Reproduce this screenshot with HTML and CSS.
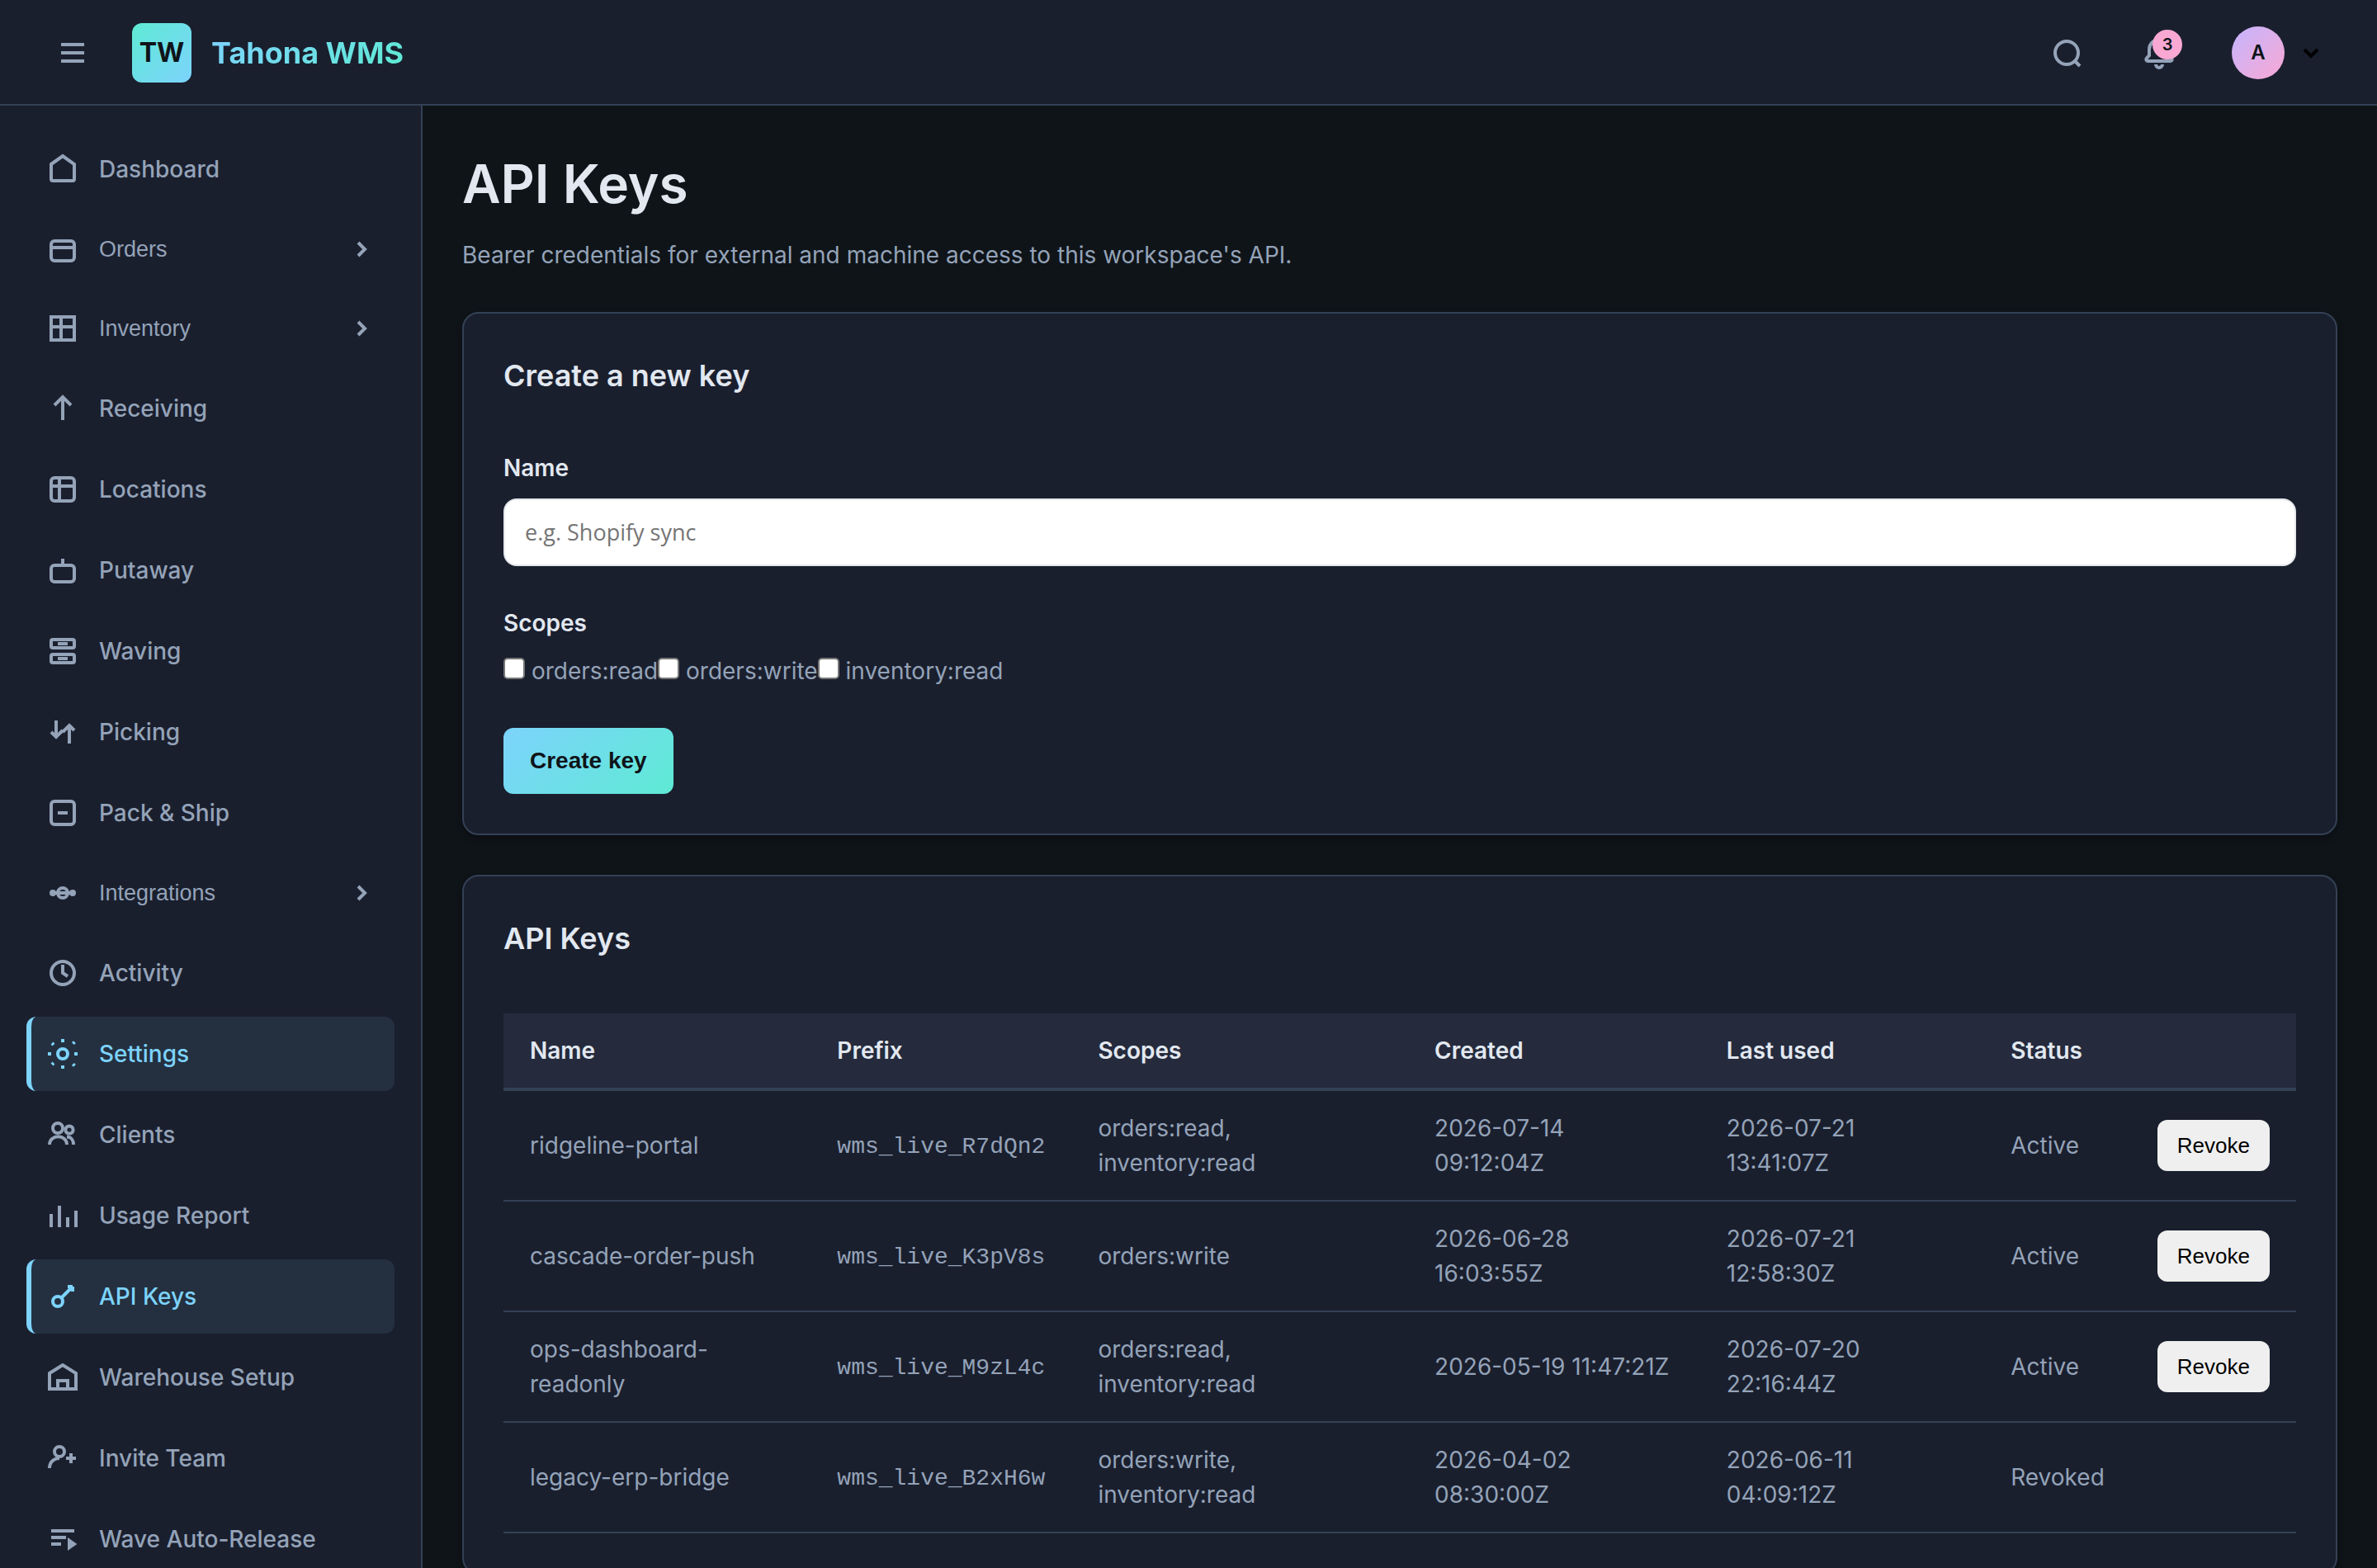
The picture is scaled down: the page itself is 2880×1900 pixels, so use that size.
FILE: index.html
```html
<!DOCTYPE html>
<html lang="en">
<head>
<meta charset="utf-8">
<title>API Keys - Tahona WMS</title>
<link rel="stylesheet" href="styles.css">
</head>
<body>
<div class="app">
  <header class="topbar">
    <div class="topbar-left">
      <button class="icon-button" type="button" aria-label="Toggle menu">
        <svg class="icon" viewBox="0 0 20 20"><path d="M3 5h14M3 10h14M3 15h14"/></svg>
      </button>
      <a class="brand" href="#">
        <span class="brand-mark">TW</span>
        <span class="brand-name">Tahona WMS</span>
      </a>
    </div>
    <div class="topbar-right">
      <button class="icon-button" type="button" aria-label="Search">
        <svg class="icon" viewBox="0 0 20 20"><circle cx="10" cy="10" r="7"/><path d="M15 15l3 3"/></svg>
      </button>
      <button class="icon-button" type="button" aria-label="Notifications">
        <svg class="icon" viewBox="0 0 20 20"><path d="M10 2a6 6 0 0 0-6 6v3.600L2.400 13.300a1 1 0 0 0 .7 1.700h13.800a1 1 0 0 0 .7-1.700L16 11.600V8a6 6 0 0 0-6-6zM8 17a2 2 0 0 0 4 0"/></svg>
        <span class="badge">3</span>
      </button>
      <button class="user-button" type="button" aria-label="Account">
        <span class="avatar">A</span>
        <svg class="chevron" viewBox="0 0 16 16"><path d="M4 6l4 4 4-4"/></svg>
      </button>
    </div>
  </header>
  <div class="body">
    <nav class="sidebar">
      <a class="nav-item" href="#"><svg class="icon" viewBox="0 0 20 20"><path d="M3 7l7-5 7 5v9a1 1 0 0 1-1 1H4a1 1 0 0 1-1-1z"/></svg>Dashboard</a>
      <button class="nav-item nav-group" type="button"><svg class="icon" viewBox="0 0 20 20"><rect x="3" y="5" width="14" height="12" rx="2"/><path d="M3 9h14"/></svg>Orders<svg class="chevron" viewBox="0 0 16 16"><path d="M6 4l4 4-4 4"/></svg></button>
      <button class="nav-item nav-group" type="button"><svg class="icon" viewBox="0 0 20 20"><path d="M3 3h14v14H3zM3 9h14M9 3v14"/></svg>Inventory<svg class="chevron" viewBox="0 0 16 16"><path d="M6 4l4 4-4 4"/></svg></button>
      <a class="nav-item" href="#"><svg class="icon" viewBox="0 0 20 20"><path d="M10 17V3M5 8l5-5 5 5"/></svg>Receiving</a>
      <a class="nav-item" href="#"><svg class="icon" viewBox="0 0 20 20"><rect x="3" y="3" width="14" height="14" rx="2"/><path d="M3 8h14M8 3v14"/></svg>Locations</a>
      <a class="nav-item" href="#"><svg class="icon" viewBox="0 0 20 20"><rect x="3" y="7" width="14" height="10" rx="2"/><path d="M10 3v4"/></svg>Putaway</a>
      <a class="nav-item" href="#"><svg class="icon" viewBox="0 0 20 20"><rect x="3" y="3" width="14" height="5" rx="1"/><rect x="3" y="12" width="14" height="5" rx="1"/><path d="M7 5.500h6M7 14.500h6"/></svg>Waving</a>
      <a class="nav-item" href="#"><svg class="icon" viewBox="0 0 20 20"><path d="M6 3v10M3 10l3 3 4-4M14 17V7M10 10l4-4 3 3"/></svg>Picking</a>
      <a class="nav-item" href="#"><svg class="icon" viewBox="0 0 20 20"><rect x="3" y="3" width="14" height="14" rx="2"/><path d="M7 10h6"/></svg>Pack &amp; Ship</a>
      <button class="nav-item nav-group" type="button"><svg class="icon" viewBox="0 0 20 20"><circle cx="4" cy="10" r="1"/><circle cx="16" cy="10" r="1"/><circle cx="10" cy="10" r="3"/><path d="M5 10h10"/></svg>Integrations<svg class="chevron" viewBox="0 0 16 16"><path d="M6 4l4 4-4 4"/></svg></button>
      <a class="nav-item" href="#"><svg class="icon" viewBox="0 0 20 20"><circle cx="10" cy="10" r="7"/><path d="M10 5v5l3 2"/></svg>Activity</a>
      <a class="nav-item active" href="#"><svg class="icon" viewBox="0 0 20 20"><circle cx="10" cy="10" r="3"/><path d="M10 1v2M10 17v2M1 10h2M17 10h2M3.500 3.500l1 1M16.200 3.800l1-1M3.500 16.500l1-1M16.200 16.200l1 1"/></svg>Settings</a>
      <a class="nav-item" href="#"><svg class="icon" viewBox="0 0 20 20"><circle cx="7" cy="6" r="3"/><circle cx="14" cy="7" r="2.300"/><path d="M2 16c0-6.500 10.500-6.500 10.500 0M12.500 11.300c2.500 0 4 2 4 4.700"/></svg>Clients</a>
      <a class="nav-item" href="#"><svg class="icon" viewBox="0 0 20 20"><path d="M3 17V9M8 17V4M13 17v-6M18 17V7"/></svg>Usage Report</a>
      <a class="nav-item active" href="#"><svg class="icon" viewBox="0 0 20 20"><circle cx="7" cy="13" r="3"/><path d="M9 11l6-6M13 4h3M16 4v3"/></svg>API Keys</a>
      <a class="nav-item" href="#"><svg class="icon" viewBox="0 0 20 20"><path d="M2 7.500l8-5 8 5V17H2zM7 17v-5h6v5"/></svg>Warehouse Setup</a>
      <a class="nav-item" href="#"><svg class="icon" viewBox="0 0 20 20"><circle cx="8" cy="6" r="3"/><path d="M2 16c0-4 3-6 6-6M15 7v6M12 10h6"/></svg>Invite Team</a>
      <a class="nav-item" href="#"><svg class="icon" viewBox="0 0 20 20"><path d="M3 5h14M3 9h9M3 13h6"/><path class="solid" d="M13 9v8l5.700-4z"/></svg>Wave Auto-Release</a>
    </nav>
    <main class="content">
      <div class="page-head">
        <h1>API Keys</h1>
        <p>Bearer credentials for external and machine access to this workspace's API.</p>
      </div>
      <section class="card">
        <h2>Create a new key</h2>
        <form class="key-form">
          <div class="field">
            <label class="field-label" for="key-name">Name</label>
            <input class="text-input" id="key-name" type="text" placeholder="e.g. Shopify sync">
          </div>
          <fieldset class="field">
            <legend class="field-label">Scopes</legend>
            <div class="scopes"><label><input type="checkbox"> orders:read</label><label><input type="checkbox"> orders:write</label><label><input type="checkbox"> inventory:read</label></div>
          </fieldset>
          <button class="primary-button" type="button">Create key</button>
        </form>
      </section>
      <section class="card">
        <h2>API Keys</h2>
        <table class="keys">
          <thead>
            <tr><th>Name</th><th>Prefix</th><th>Scopes</th><th>Created</th><th>Last used</th><th>Status</th><th></th></tr>
          </thead>
          <tbody>
            <tr><td>ridgeline-portal</td><td><code>wms_live_R7dQn2</code></td><td>orders:read, inventory:read</td><td>2026-07-14 09:12:04Z</td><td>2026-07-21 13:41:07Z</td><td>Active</td><td><button class="revoke" type="button">Revoke</button></td></tr>
            <tr><td>cascade-order-push</td><td><code>wms_live_K3pV8s</code></td><td>orders:write</td><td>2026-06-28 16:03:55Z</td><td>2026-07-21 12:58:30Z</td><td>Active</td><td><button class="revoke" type="button">Revoke</button></td></tr>
            <tr><td>ops-dashboard-readonly</td><td><code>wms_live_M9zL4c</code></td><td>orders:read, inventory:read</td><td>2026-05-19 11:47:21Z</td><td>2026-07-20 22:16:44Z</td><td>Active</td><td><button class="revoke" type="button">Revoke</button></td></tr>
            <tr><td>legacy-erp-bridge</td><td><code>wms_live_B2xH6w</code></td><td>orders:write, inventory:read</td><td>2026-04-02 08:30:00Z</td><td>2026-06-11 04:09:12Z</td><td>Revoked</td><td></td></tr>
          </tbody>
        </table>
      </section>
    </main>
  </div>
</div>
</body>
</html>
```

FILE: styles.css
```css
:root {
  --bg: #0f1419;
  --surface: #1a1f2e;
  --surface-raised: #252b3d;
  --line: #334155;
  --text: #e2e8f0;
  --muted: #94a3b8;
  --ink: #0f1419;
  --sky: #7dd3fc;
  --teal: #5eead4;
  --control-font: "Liberation Sans", Arial, sans-serif;
}

* {
  box-sizing: border-box;
  margin: 0;
  padding: 0;
}

body {
  background: var(--bg);
  color: var(--text);
  font: 28px/42px Inter, sans-serif;
}

a {
  color: inherit;
  text-decoration: none;
}

button {
  background: none;
  border: 0;
  font: 27px/30px var(--control-font);
}

fieldset {
  border: 0;
  min-width: 0;
}

.app {
  display: flex;
  flex-direction: column;
  height: 100vh;
}

.icon,
.chevron {
  flex: none;
  fill: none;
  stroke: currentColor;
  stroke-width: 2;
}

.icon {
  width: 40px;
  height: 40px;
}

.icon .solid {
  fill: currentColor;
  stroke: none;
}

.chevron {
  width: 32px;
  height: 32px;
}

/* Top bar */
.topbar {
  flex: none;
  display: flex;
  align-items: center;
  justify-content: space-between;
  height: 128px;
  padding: 2px 48px 0;
  background: var(--surface);
  border-bottom: 2px solid var(--line);
}

.topbar-left,
.topbar-right {
  display: flex;
  align-items: center;
  gap: 32px;
}

.brand {
  display: flex;
  align-items: center;
  gap: 24px;
}

.brand-mark {
  width: 72px;
  height: 72px;
  border-radius: 12px;
  background: linear-gradient(135deg, var(--teal), var(--sky));
  color: var(--ink);
  font-size: 32px;
  font-weight: 700;
  line-height: 72px;
  text-align: center;
}

.brand-name {
  background: linear-gradient(135deg, var(--sky), var(--teal));
  background-clip: text;
  color: transparent;
  font-size: 36px;
  font-weight: 700;
}

.icon-button {
  position: relative;
  display: flex;
  padding: 20px;
  color: var(--muted);
}

.badge {
  position: absolute;
  top: 12px;
  right: 12px;
  width: 36px;
  height: 36px;
  border-radius: 50%;
  background: #f9a8d4;
  color: var(--ink);
  font: 600 20px/36px Inter, sans-serif;
  text-align: center;
}

.user-button {
  display: flex;
  align-items: center;
  gap: 16px;
  padding: 0 16px;
  color: #000;
}

.avatar {
  width: 64px;
  height: 64px;
  border-radius: 50%;
  background: linear-gradient(135deg, #c4b5fd, #f9a8d4);
  color: var(--ink);
  font: 600 24px/64px Inter, sans-serif;
  text-align: center;
}

/* Side navigation */
.body {
  flex: 1;
  display: flex;
  min-height: 0;
}

.sidebar {
  flex: none;
  display: flex;
  flex-direction: column;
  gap: 8px;
  width: 512px;
  padding: 32px;
  overflow-y: auto;
  scrollbar-width: none;
  background: var(--surface);
  border-right: 2px solid var(--line);
}

.nav-item {
  flex: none;
  display: flex;
  align-items: center;
  gap: 24px;
  padding: 24px 24px 24px 18px;
  border-left: 6px solid transparent;
  border-radius: 12px;
  color: var(--muted);
  font-weight: 500;
}

.nav-group {
  font-weight: 400;
}

.nav-group .chevron {
  margin-left: auto;
}

.nav-item.active {
  border-left-color: var(--sky);
  background: #243040;
  color: var(--sky);
}

/* Page */
.content {
  flex: 1;
  display: flex;
  flex-direction: column;
  gap: 48px;
  min-width: 0;
  padding: 48px;
  overflow-y: auto;
  scrollbar-width: none;
}

.page-head {
  display: flex;
  flex-direction: column;
  gap: 18px;
  color: var(--muted);
}

h1 {
  color: var(--text);
  font-size: 64px;
  font-weight: 600;
  line-height: 94px;
}

h2 {
  font-size: 36px;
  font-weight: 600;
  line-height: 54px;
}

.card {
  display: flex;
  flex-direction: column;
  gap: 64px;
  padding: 48px;
  background: var(--surface);
  border: 2px solid var(--line);
  border-radius: 20px;
  box-shadow: 0 4px 8px rgba(0, 0, 0, 0.3);
}

.key-form {
  display: flex;
  flex-direction: column;
  align-items: flex-start;
  gap: 48px;
}

.field {
  width: 100%;
}

.field-label {
  display: block;
  margin-bottom: 16px;
  font-weight: 600;
}

.text-input {
  display: block;
  width: 100%;
  padding: 20px 24px;
  border: 2px solid #e5e7eb;
  border-radius: 16px;
  background: #fff;
  color: #111827;
  font: 27px/38px "Open Sans", sans-serif;
}

.text-input::placeholder {
  color: #757575;
}

.scopes {
  color: var(--muted);
}

.scopes input {
  appearance: none;
  width: 26px;
  height: 26px;
  border: 2px solid #767676;
  border-radius: 5px;
  background: #fff;
}

.scopes input:checked {
  background: var(--sky);
}

.primary-button {
  padding: 24px 32px;
  border-radius: 12px;
  background: linear-gradient(135deg, var(--sky), var(--teal));
  color: var(--ink);
  font: 700 28px/32px var(--control-font);
}

/* Keys table */
.keys {
  width: 100%;
  border-collapse: separate;
  border-spacing: 0;
  color: var(--muted);
}

.keys th,
.keys td {
  padding: 24px 32px;
  border-bottom: 2px solid var(--line);
  text-align: left;
  vertical-align: middle;
}

.keys th {
  border-bottom-width: 4px;
  background: var(--surface-raised);
  color: var(--text);
  font-weight: 600;
}

.keys code {
  font: 28px/42px "Courier New", "Liberation Mono", monospace;
}

.revoke {
  display: block;
  padding: 16px 24px;
  border-radius: 12px;
  background: #efefef;
  color: #000;
  font-size: 26px;
}
```
